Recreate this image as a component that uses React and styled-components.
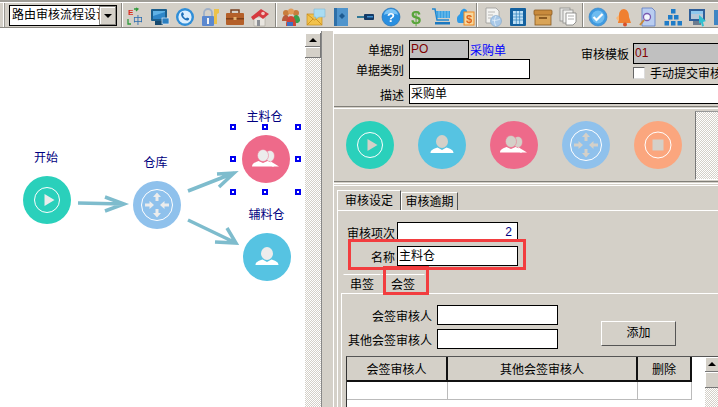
import React from 'react';
import styled, { createGlobalStyle } from 'styled-components';

const GlobalStyle = createGlobalStyle`
    html, body {
        margin: 0;
        width: 718px;
        height: 407px;
        overflow: hidden;
        background: #fff;
        font-family: "Liberation Sans", "Noto Sans CJK SC", sans-serif;
        font-size: 12px;
        color: #000;
    }
    * { box-sizing: border-box; }
`;

const GREY = '#d4d0c8';
const hatch = `repeating-conic-gradient(${GREY} 0 25%, #fff 0 50%) 0 0 / 2px 2px`;

const Page = styled.div`
    width: 718px;
    height: 407px;
    display: flex;
    flex-direction: column;
    overflow: hidden;
`;

/* toolbar */
const Toolbar = styled.div`
    height: 28px;
    flex: none;
    display: flex;
    background: ${GREY};
    border-top: 2px solid #a09e98;
    border-bottom: 1px solid #8a8882;
    box-shadow: inset 0 1px 0 #fff;
    overflow: hidden;
`;

const Grip = styled.div`
    width: 2px;
    margin: 1px 4px 0 3px;
    border-left: 1px solid #fff;
    border-right: 1px solid #9a9892;
`;

const Combo = styled.div`
    width: 109px;
    height: 21px;
    margin: 3px 4px 0 0;
    display: flex;
    justify-content: space-between;
    background: #fff;
    border: 1px solid #000;
`;

const ComboText = styled.div`
    width: 89px;
    padding-left: 2px;
    overflow: hidden;
    white-space: nowrap;
    line-height: 19px;
    font-size: 12px;
`;

const ComboButton = styled.div`
    width: 17px;
    display: flex;
    align-items: center;
    justify-content: center;
    background: ${GREY};
    border: 1px solid #8a8882;
    box-shadow: inset 1px 1px 0 #fff;
`;

const Caret = styled.span`
    width: 0;
    height: 0;
    border-left: 4px solid transparent;
    border-right: 4px solid transparent;
    border-${(p) => (p.$up ? 'bottom' : 'top')}: 4px solid #000;
`;

const ToolSep = styled.div`
    width: 2px;
    flex: none;
    margin-top: 1px;
    border-left: 1px solid #8a8882;
    border-right: 1px solid #fff;
`;

const ToolGroup = styled.div`
    display: flex;
    flex: none;
    gap: 5px;
    padding: 5px ${(p) => p.$right}px 0 ${(p) => p.$left}px;
`;

const ToolIcon = styled.svg`
    width: 20px;
    height: 20px;
    flex: none;
    filter: blur(0.35px);
`;

const mono = { fontFamily: '"Liberation Sans", "Noto Sans CJK SC", sans-serif', fontWeight: 700 };

const tools = {
    lang: <><text x="3" y="8" fontSize="8" fill="#d8281e" style={mono}>E</text><text x="8" y="17" fontSize="10" fill="#2a6cb0" fontFamily="Noto Sans CJK SC">中</text><path d="M9 2h4M11 1l2 1-2 2M3 12v5h3" stroke="#2f9a3c" strokeWidth="1.3" fill="none" /></>,
    monitor: <><rect x="1" y="2" width="16" height="12" rx="1" fill="#1b5f8e" /><rect x="3" y="4" width="12" height="8" fill="#5fb2e6" /><path d="M3 9l12-4v7H3z" fill="#2e86c8" /><rect x="5" y="14" width="8" height="4" fill="#15496f" /><rect x="12" y="11" width="7" height="6" fill="#2b7fc0" stroke="#e6eef5" strokeWidth=".7" /></>,
    phone: <><circle cx="10" cy="10" r="9" fill="#2f8ed8" /><circle cx="10" cy="10" r="6.6" fill="#dcefff" /><path d="M6.5 6c.8-1 1.6-.8 2 .2l.5 1.2-1 1c.6 1.4 1.5 2.3 3 3l1-1 1.4.6c.9.4 1 1.2.2 2-1.4 1.2-3.6.4-5.4-1.4S5.500 7.400 6.500 6z" fill="#1f6fb8" /></>,
    lock: <><path d="M4 9V6a4 4 0 018 0v3" fill="none" stroke="#9fb0c8" strokeWidth="1.800" /><rect x="2" y="9" width="12" height="10" rx="1" fill="#5b88cf" /><rect x="7" y="11" width="2" height="6" fill="#f4f4f4" /><path d="M14 2h5v4l-2 1v10h-3V7z" fill="#ecc24a" /></>,
    case: <><rect x="6" y="3" width="8" height="4" fill="none" stroke="#7a4020" strokeWidth="1.500" /><rect x="1" y="6" width="18" height="12" rx="1" fill="#b4602a" /><rect x="1" y="11" width="18" height="1.500" fill="#7e3f18" /><rect x="8.500" y="10" width="3" height="3" fill="#e2b070" /></>,
    home: <><path d="M4 10h11v9H4z" fill="#e9e6e0" stroke="#a8a49c" strokeWidth=".6" /><path d="M1 10l10-8 8 5-6 5-4-3-6 4z" fill="#d63a3f" /><circle cx="13" cy="6.500" r="1.800" fill="#f2c6c0" /><rect x="7" y="13" width="3" height="6" fill="#8b8f96" /></>,
    people: <><circle cx="5" cy="6" r="3" fill="#c87d3c" /><circle cx="15" cy="6" r="3" fill="#c87d3c" /><circle cx="10" cy="4.500" r="3" fill="#e29c58" /><path d="M1 14c0-4 2-6 4-6s3 2 3 6z" fill="#b85a3a" /><path d="M12 14c0-4 1-6 3-6s4 2 4 6l-2 2h-4z" fill="#3aa04c" /><path d="M5 19c0-7 2-10 5-10s5 3 5 10z" fill="#cf4536" /><rect x="6" y="15" width="6" height="4" fill="#3f6fc0" /></>,
    mail: <><rect x="1" y="7" width="15" height="11" fill="#f2c24c" stroke="#c98f1e" strokeWidth=".7" /><path d="M1 7l7.500 6L16 7M1 18l6-6M16 18l-6-6" fill="none" stroke="#c98f1e" strokeWidth=".9" /><path d="M8 2h11v8h-6l-3 2v-2H8z" fill="#a9dcf2" stroke="#7cb8d8" strokeWidth=".6" /></>,
    book: <><rect x="3" y="1" width="14" height="18" fill="#4f94cc" /><rect x="3" y="1" width="3" height="18" fill="#2f70a8" /><path d="M11 6l3 3-3 3-3-3z" fill="#1d5a90" /></>,
    pin: <><path d="M1 10h8" stroke="#1f6f90" strokeWidth="1.800" /><rect x="8" y="7" width="10" height="6" rx="1" fill="#143a66" /><rect x="11" y="9" width="6" height="1.500" fill="#3b8ed0" /></>,
    help: <><circle cx="10" cy="10" r="9" fill="#2a8fe0" stroke="#1a6ab0" strokeWidth=".6" /><path d="M3 8a7 6 0 0114 0c-4-2-10-2-14 0z" fill="#7cc4f5" /><text x="10" y="15" textAnchor="middle" fontSize="13" fill="#fff" style={mono}>?</text></>,
    money: <text x="10" y="17" textAnchor="middle" fontSize="18" fill="#58a53a" style={mono}>$</text>,
    cart: <><path d="M1 2h3l2 11h12" fill="none" stroke="#1f86d0" strokeWidth="1.500" /><path d="M5 4h14v7H6z" fill="#3aa0e0" /><path d="M8 4v7M11 4v7M14 4v7M17 4v7" stroke="#9fd6f5" strokeWidth=".7" /><rect x="4" y="15" width="15" height="2.500" fill="#1b78c0" /></>,
    tag: <><path d="M1 11c0-2 2-3 3-4 0-3 3-6 5-5 3 1 2 4 2 6v8H3c-2 0-2-3-2-5z" fill="#2f9ae6" /><rect x="8" y="5" width="10" height="13" fill="#f6d9a0" stroke="#f08a20" strokeWidth="1" /><text x="13" y="16" textAnchor="middle" fontSize="11" fill="#e0641a" style={mono}>$</text></>,
    report: <><path d="M3 1h10l3 3v12H3z" fill="#f3f3f1" stroke="#9a9a98" strokeWidth=".8" /><path d="M5 5h7M5 8h5M5 11h3" stroke="#a8a8a8" strokeWidth=".8" /><circle cx="13" cy="14" r="5.500" fill="#a8c8e8" stroke="#7fa4c8" strokeWidth=".6" /><path d="M9 13c3 1 6 0 8-1M13 9c-2 3-2 7 0 10" stroke="#e8f2fa" fill="none" strokeWidth=".8" /></>,
    sheet: <><rect x="2" y="1" width="16" height="18" rx="1" fill="#14619f" /><rect x="5" y="4" width="10" height="13" fill="#bfe0f5" /><path d="M5 7h10M5 10h10M5 13h10M8.300 4v13M11.600 4v13" stroke="#2d80bd" strokeWidth=".7" /></>,
    box: <><rect x="2" y="7" width="16" height="11" fill="#d9a458" stroke="#8a5a22" strokeWidth=".8" /><rect x="1" y="3" width="18" height="5" rx="1" fill="#c88a3c" stroke="#8a5a22" strokeWidth=".8" /><rect x="6" y="10" width="8" height="2" fill="#8a5a22" /></>,
    copies: <><rect x="2" y="1" width="10" height="13" fill="#e6e6e4" stroke="#8d8d8b" strokeWidth=".8" /><rect x="5" y="3" width="10" height="13" fill="#f2f2f0" stroke="#8d8d8b" strokeWidth=".8" /><path d="M8 6h10v9l-3 3H8z" fill="#fff" stroke="#7d7d7b" strokeWidth=".8" /><path d="M10 9h6M10 12h6" stroke="#9a9a98" strokeWidth=".8" /></>,
    check: <><circle cx="10" cy="10" r="9" fill="#3f9ae0" stroke="#2f80c4" strokeWidth=".6" /><circle cx="10" cy="10" r="6.500" fill="#6fbcf0" /><path d="M5.500 10l3 3 6-6" fill="none" stroke="#fff" strokeWidth="2.200" /></>,
    bell: <><path d="M11 2c4 1 5 4 5 8l2 6H5c0-3 1-5 1-8s2-6 5-6z" fill="#f08030" /><path d="M3 11l3-3v7z" fill="#f6b878" /><circle cx="12" cy="17.500" r="2" fill="#d8502a" /></>,
    search: <><path d="M4 1h10l3 3v15H4z" fill="#b9cdf0" stroke="#5c78c0" strokeWidth=".8" /><circle cx="9" cy="10" r="3.500" fill="#f4f7fd" stroke="#7a5ab0" strokeWidth="1.300" /><path d="M6 13l-4 5" stroke="#c88a3c" strokeWidth="2" /></>,
    tree: <><rect x="8" y="2" width="4.500" height="4.500" fill="#1f7cc8" /><rect x="5" y="8" width="4.500" height="4.500" fill="#1f7cc8" /><rect x="11" y="8" width="4.500" height="4.500" fill="#1f7cc8" /><rect x="1.500" y="14" width="4.500" height="4.500" fill="#1f7cc8" /><rect x="8" y="14" width="4.500" height="4.500" fill="#1f7cc8" /><rect x="14.500" y="14" width="4.500" height="4.500" fill="#1f7cc8" /></>,
    screen: <><rect x="1" y="2" width="16" height="12" fill="#2f5f9a" /><rect x="3" y="4" width="12" height="3" fill="#8fc8ee" /><rect x="3" y="7" width="12" height="5" fill="#b8c8d8" /><rect x="5" y="14" width="8" height="4" fill="#6c7c90" /><path d="M11 8l7 6-3 1 1 4-2 .5-1-4-2 1z" fill="#2fc0d0" /></>,
    last: <rect x="1" y="3" width="16" height="15" fill="#3f86c4" />,
};

const ToolSet = ({ names, left, right }) => (
    <ToolGroup $left={left} $right={right}>
        {names.map((n) => (
            <ToolIcon key={n} viewBox="0 0 20 20">{tools[n]}</ToolIcon>
        ))}
    </ToolGroup>
);

/* flow icons, shared by the canvas and the palette */
const Disc = styled.svg`
    width: 48px;
    height: 48px;
    flex: none;
    display: block;
    color: ${(p) => (p.$onPanel ? GREY : '#ececec')};
`;

const glyphs = {
    play: <><circle cx="24" cy="24" r="12.500" fill="none" stroke="#fff" /><path d="M21.500 18v12l10-6z" fill="currentColor" /></>,
    user: <><path d="M12.500 32c0-3 3-4 7-5.500l4.500 2.500 4.500-2.500c4 1.500 7 2.500 7 5.500z" fill="#fff" /><ellipse cx="24" cy="20.500" rx="6" ry="6.500" fill="currentColor" /></>,
    users: <><ellipse cx="28" cy="21" rx="4.500" ry="5.500" fill="currentColor" stroke="#ee6a8a" strokeWidth=".5" /><path d="M28 26l9 5.500H30z" fill="#fff" /><path d="M10 31.500c0-3 3-4 6.500-5.500l4.500 2 4.500-2c3.500 1.500 6.500 2.500 6.500 5.500z" fill="#fff" /><ellipse cx="21" cy="20.500" rx="5.500" ry="6" fill="currentColor" stroke="#ee6a8a" strokeWidth=".5" /></>,
    route: <><circle cx="24" cy="24" r="15.500" fill="none" stroke="#fff" /><path d="M24 11.500l-4 4.500h2.500v4h3v-4H28zM24 36.500l-4-4.500h2.500v-4h3v4H28zM21 24l-4.500-4v2.500H12v3h4.500V28zM27 24l4.500-4v2.500H36v3h-4.500V28z" fill="currentColor" /></>,
    stop: <><circle cx="24" cy="24" r="13" fill="none" stroke="#fff" /><rect x="18.500" y="18.500" width="11" height="11" fill="currentColor" /></>,
};

const FlowIcon = ({ color, glyph, onPanel }) => (
    <Disc viewBox="0 0 48 48" $onPanel={onPanel}>
        <circle cx="24" cy="24" r="24" fill={color} />
        {glyphs[glyph]}
    </Disc>
);

/* left: free diagram canvas */
const Body = styled.div`
    flex: 1;
    display: flex;
    min-height: 0;
`;

const Canvas = styled.div`
    position: relative;
    width: 305px;
    flex: none;
    background: #fff;
`;

const Arrows = styled.svg`
    position: absolute;
    left: 0;
    top: 0;
    width: 305px;
    height: 378px;
`;

const Node = styled.div`
    position: absolute;
    left: ${(p) => p.$x - 30}px;
    top: ${(p) => p.$y - 78}px;
    width: 60px;
    display: flex;
    flex-direction: column;
    align-items: center;
    gap: 10px;
`;

const NodeLabel = styled.div`
    height: 16px;
    line-height: 16px;
    color: #000080;
    white-space: nowrap;
    margin-left: ${(p) => p.$shift || 0}px;
`;

const Handle = styled.span`
    position: absolute;
    left: ${(p) => p.$x - 3}px;
    top: ${(p) => p.$y - 31}px;
    width: 6px;
    height: 6px;
    background: #fff;
    border: 2px solid #0000f0;
`;

/* scroll bars */
const ScrollBar = styled.div`
    width: ${(p) => p.$w}px;
    flex: none;
    display: flex;
    flex-direction: column;
    margin-top: ${(p) => p.$top || 0}px;
    background: ${hatch};
`;

const ScrollBtn = styled.div`
    height: ${(p) => p.$h}px;
    flex: none;
    display: flex;
    align-items: center;
    justify-content: center;
    background: ${GREY};
    border-right: 1px solid #777;
    border-bottom: 1px solid #777;
    box-shadow: inset 1px 1px 0 #fff;
`;

const Splitter = styled.div`
    width: 12px;
    flex: none;
    margin-top: 3px;
    background: ${GREY};
    border-left: 1px solid #888;
`;

/* right: property panel */
const Panel = styled.div`
    flex: 1;
    min-width: 0;
    margin-top: 5px;
    display: flex;
    flex-direction: column;
    background: ${GREY};
    border-left: 1px solid #fff;
    border-top: 1px solid #fff;
    overflow: hidden;
`;

const Head = styled.div`
    height: 72px;
    flex: none;
    padding-top: 6px;
    display: flex;
    flex-direction: column;
    gap: 3px;
`;

const HeadTop = styled.div`
    display: flex;
`;

const HeadLeft = styled.div`
    width: 247px;
    flex: none;
`;

const HeadRight = styled.div`
    flex: 1;
    padding-top: 3px;
    white-space: nowrap;
`;

const Row = styled.div`
    display: flex;
    align-items: center;
`;

const Label = styled.div`
    width: ${(p) => p.$w}px;
    flex: none;
    margin-right: ${(p) => p.$gap ?? 5}px;
    text-align: right;
    white-space: nowrap;
`;

const Field = styled.div`
    width: ${(p) => p.$w}px;
    height: ${(p) => p.$h || 20}px;
    flex: none;
    padding: 0 ${(p) => (p.$right ? 5 : 1)}px 0 1px;
    text-align: ${(p) => (p.$right ? 'right' : 'left')};
    line-height: ${(p) => (p.$h || 20) - 2}px;
    background: ${(p) => p.$bg || '#fff'};
    color: ${(p) => p.$color || '#000'};
    border: 1px solid #000;
    white-space: nowrap;
`;

const BlueLink = styled.span`
    margin-left: 1px;
    color: #0000ff;
`;

const Check = styled.span`
    width: 12px;
    height: 12px;
    flex: none;
    margin: 0 5px 0 52px;
    background: #fff;
    border: 1px solid #666;
    border-right-color: #ddd;
    border-bottom-color: #ddd;
`;

const Rule = styled.div`
    height: 3px;
    flex: none;
    border-top: 1px solid #807e78;
    border-bottom: 1px solid #fff;
`;

const Palette = styled.div`
    height: 72px;
    flex: none;
    display: flex;
    align-items: center;
    padding-left: 12px;
`;

const PaletteIcons = styled.div`
    display: flex;
    gap: 24px;
    flex: none;
`;

const PaletteHatch = styled.div`
    width: 24px;
    height: 69px;
    flex: none;
    margin-left: 13px;
    background: ${hatch};
    border-left: 1px solid #777;
    border-top: 1px solid #999;
    border-bottom: 1px solid #fff;
`;

const Lower = styled.div`
    flex: 1;
    min-height: 0;
    display: flex;
    flex-direction: column;
    padding: 4px 0 0 3px;
    margin-top: 1px;
    border-top: 1px solid #fff;
`;

const Tabs = styled.div`
    height: ${(p) => p.$h}px;
    flex: none;
    display: flex;
    align-items: flex-end;
    padding-left: ${(p) => p.$left || 0}px;
    margin-top: ${(p) => p.$top || 0}px;
`;

const Tab = styled.div`
    width: ${(p) => p.$w}px;
    height: ${(p) => (p.$active ? '100%' : 'calc(100% - 2px)')};
    flex: none;
    line-height: ${(p) => (p.$active ? 20 : 19)}px;
    text-align: center;
    background: ${GREY};
    border-top: 1px solid #fff;
    border-left: 1px solid ${(p) => (p.$plain ? GREY : '#fff')};
    border-right: 1px solid ${(p) => (p.$plain ? GREY : '#555')};
    white-space: nowrap;
`;

const TabBody = styled.div`
    position: relative;
    flex: 1;
    min-height: 0;
    display: flex;
    flex-direction: column;
    padding-top: 11px;
    border-top: 1px solid #fff;
    border-left: 1px solid #fff;
`;

const Rows = styled.div`
    display: flex;
    flex-direction: column;
    gap: 4px;
`;

const Highlight = styled.div`
    position: absolute;
    left: ${(p) => p.$x}px;
    top: ${(p) => p.$y}px;
    width: ${(p) => p.$w}px;
    height: ${(p) => p.$h}px;
    border: 3px solid #f23d3f;
    pointer-events: none;
`;

const SubBody = styled.div`
    flex: 1;
    min-height: 0;
    display: flex;
    flex-direction: column;
    margin-left: 3px;
    padding-top: 11px;
    border-top: 1px solid #fff;
    border-left: 1px solid #fff;
`;

const SignForm = styled.div`
    display: flex;
    align-items: flex-end;
`;

const AddButton = styled.div`
    width: 75px;
    height: 25px;
    margin: 0 0 3px 43px;
    line-height: 23px;
    text-align: center;
    background: ${GREY};
    border: 1px solid #fff;
    border-right-color: #555;
    border-bottom-color: #555;
`;

const TableWrap = styled.div`
    flex: 1;
    min-height: 0;
    margin: 7px 0 0 4px;
    display: flex;
    background: #fff;
    border-top: 1px solid #555;
    border-left: 1px solid #333;
`;

const Grid = styled.table`
    width: 344px;
    height: 43px;
    flex: none;
    table-layout: fixed;
    border-collapse: collapse;
`;

const HeadCell = styled.th`
    width: ${(p) => p.$w}px;
    height: 24px;
    padding: 0;
    font-weight: 400;
    background: ${GREY};
    border-right: 2px solid #111;
    border-bottom: 2px solid #111;
`;

const Cell = styled.td`
    padding: 0;
    background: #fff;
    border-right: 1px solid #bbb;
    border-bottom: 1px solid #bbb;
`;

const TableGap = styled.div`
    width: 13px;
    flex: none;
`;

const App = () => (
    <Page>
        <GlobalStyle />
        <Toolbar>
            <Grip />
            <Combo>
                <ComboText>路由审核流程设计</ComboText>
                <ComboButton><Caret /></ComboButton>
            </Combo>
            <ToolSep />
            <ToolSet left={2} right={5} names={['lang', 'monitor', 'phone', 'lock', 'case', 'home']} />
            <ToolSep />
            <ToolSet left={4} right={0} names={['people', 'mail', 'book', 'pin', 'help', 'money', 'cart', 'tag']} />
            <ToolSep />
            <ToolSet left={5} right={4} names={['report', 'sheet', 'box', 'copies']} />
            <ToolSep />
            <ToolSet left={4} right={0} names={['check', 'bell', 'search', 'tree', 'screen', 'last']} />
        </Toolbar>
        <Body>
            <Canvas>
                <Arrows viewBox="0 0 305 378" fill="none" stroke="#7ebccd" strokeWidth="3.5">
                    <path d="M78 175L124 176M105 169L124 176L105 183" />
                    <path d="M188 163L234 145M217 146L234 145L219 159" />
                    <path d="M188 192L236 215M215 214L236 215L227 200" />
                </Arrows>
                <Node $x={47} $y={200}>
                    <NodeLabel $shift={-2}>开始</NodeLabel>
                    <FlowIcon color="#2ad0bb" glyph="play" />
                </Node>
                <Node $x={157} $y={205}>
                    <NodeLabel $shift={-3}>仓库</NodeLabel>
                    <FlowIcon color="#8fc1ec" glyph="route" />
                </Node>
                <Node $x={266} $y={159}>
                    <NodeLabel $shift={-3}>主料仓</NodeLabel>
                    <FlowIcon color="#ee6a8a" glyph="users" />
                </Node>
                <Node $x={267} $y={257}>
                    <NodeLabel $shift={-1}>辅料仓</NodeLabel>
                    <FlowIcon color="#56c3e2" glyph="user" />
                </Node>
                {[[233, 127], [265, 127], [298, 127], [233, 159], [298, 159], [233, 192], [265, 192], [298, 192]].map(([x, y]) => (
                    <Handle key={`${x}-${y}`} $x={x} $y={y} />
                ))}
            </Canvas>
            <ScrollBar $w={16} $top={5}>
                <ScrollBtn $h={14}><Caret $up /></ScrollBtn>
                <ScrollBtn $h={11} />
            </ScrollBar>
            <Splitter />
            <Panel>
                <Head>
                    <HeadTop>
                        <HeadLeft>
                            <Row>
                                <Label $w={70}>单据别</Label>
                                <Field $w={60} $h={19} $bg="#c0c0c0" $color="#800000">PO</Field>
                                <BlueLink>采购单</BlueLink>
                            </Row>
                            <Row>
                                <Label $w={70}>单据类别</Label>
                                <Field $w={121} $h={20} />
                            </Row>
                        </HeadLeft>
                        <HeadRight>
                            <Row>
                                <Label $w={47}>审核模板</Label>
                                <Field $w={90} $h={21} $bg="#c0c0c0" $color="#800000">01</Field>
                            </Row>
                            <Row>
                                <Check />
                                手动提交审核
                            </Row>
                        </HeadRight>
                    </HeadTop>
                    <Row>
                        <Label $w={70}>描述</Label>
                        <Field $w={320} $h={20}>采购单</Field>
                    </Row>
                </Head>
                <Rule />
                <Palette>
                    <PaletteIcons>
                        <FlowIcon onPanel color="#2ad0bb" glyph="play" />
                        <FlowIcon onPanel color="#56c3e2" glyph="user" />
                        <FlowIcon onPanel color="#ee6a8a" glyph="users" />
                        <FlowIcon onPanel color="#8fc1ec" glyph="route" />
                        <FlowIcon onPanel color="#fba67e" glyph="stop" />
                    </PaletteIcons>
                    <PaletteHatch />
                </Palette>
                <Rule />
                <Lower>
                    <Tabs $h={20}>
                        <Tab $active $w={64}>审核设定</Tab>
                        <Tab $w={57}>审核逾期</Tab>
                    </Tabs>
                    <TabBody>
                        <Rows>
                            <Row>
                                <Label $w={57} $gap={2}>审核项次</Label>
                                <Field $w={121} $right $color="#000080">2</Field>
                            </Row>
                            <Row>
                                <Label $w={57} $gap={2}>名称</Label>
                                <Field $w={121}>主料仓</Field>
                            </Row>
                        </Rows>
                        <Tabs $h={19} $left={5} $top={8}>
                            <Tab $active $plain $w={38}>串签</Tab>
                            <Tab $active $plain $w={44}>会签</Tab>
                        </Tabs>
                        <SubBody>
                            <SignForm>
                                <Rows>
                                    <Row>
                                        <Label $w={90}>会签审核人</Label>
                                        <Field $w={121} />
                                    </Row>
                                    <Row>
                                        <Label $w={90}>其他会签审核人</Label>
                                        <Field $w={121} />
                                    </Row>
                                </Rows>
                                <AddButton>添加</AddButton>
                            </SignForm>
                            <TableWrap>
                                <Grid>
                                    <thead>
                                        <tr>
                                            <HeadCell $w={100}>会签审核人</HeadCell>
                                            <HeadCell $w={190}>其他会签审核人</HeadCell>
                                            <HeadCell $w={54}>删除</HeadCell>
                                        </tr>
                                    </thead>
                                    <tbody>
                                        <tr>
                                            <Cell />
                                            <Cell />
                                            <Cell />
                                        </tr>
                                    </tbody>
                                </Grid>
                                <TableGap />
                                <ScrollBar $w={14}>
                                    <ScrollBtn $h={15}><Caret $up /></ScrollBtn>
                                    <ScrollBtn $h={16} />
                                </ScrollBar>
                            </TableWrap>
                        </SubBody>
                        <Highlight $x={10} $y={28} $w={178} $h={31} />
                        <Highlight $x={45} $y={55} $w={46} $h={29} />
                    </TabBody>
                </Lower>
            </Panel>
        </Body>
    </Page>
);

export default App;
